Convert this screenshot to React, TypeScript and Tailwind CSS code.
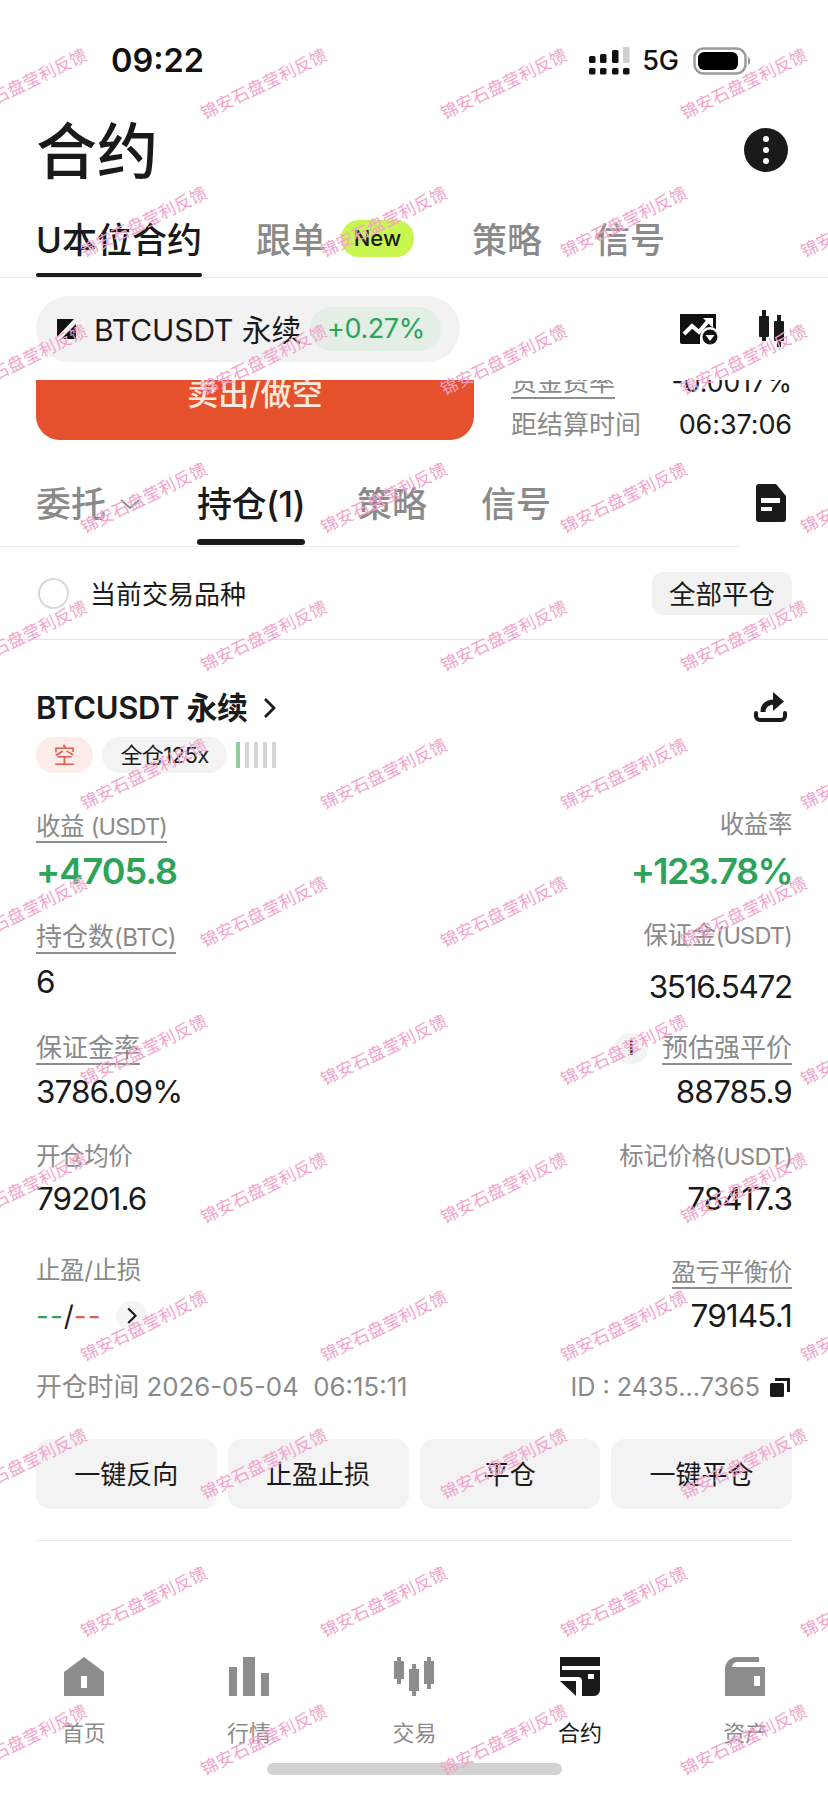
import React from "react";

const WM_ROWS = Array.from({ length: 13 }, (_, i) => i);

function Watermarks() {
  const items: { x: number; y: number }[] = [];
  WM_ROWS.forEach((r) => {
    const y = 84 + r * 138;
    const start = r % 2 === 0 ? 24 : 144;
    for (let k = 0; k < 4; k++) items.push({ x: start + k * 240, y });
  });
  return (
    <div className="absolute inset-0 pointer-events-none overflow-hidden">
      {items.map((p, i) => (
        <div
          key={i}
          className="absolute whitespace-nowrap text-[17px] leading-[20px] tracking-[0.3px] text-[#f3a3cb] -rotate-[26deg] -translate-x-1/2 -translate-y-1/2"
          style={{ left: p.x, top: p.y }}
        >
          锦安石盘莹利反馈
        </div>
      ))}
    </div>
  );
}

function Signal() {
  return (
    <svg width="42" height="28" viewBox="0 0 42 28" className="block">
      <rect x="0" y="9" width="6.5" height="7" rx="1.5" fill="#111" />
      <rect x="11" y="7" width="6.5" height="9" rx="1.5" fill="#111" />
      <rect x="23" y="3" width="6.5" height="13" rx="1.5" fill="#111" />
      <rect x="34" y="0" width="6.5" height="16" rx="1" fill="#cfcfcf" />
      <rect x="0" y="21" width="6.5" height="6.5" rx="1.5" fill="#111" />
      <rect x="11" y="21" width="6.5" height="6.5" rx="1.5" fill="#111" />
      <rect x="23" y="21" width="6.5" height="6.5" rx="1.5" fill="#111" />
      <rect x="34" y="21" width="6.5" height="6.5" rx="1.5" fill="#111" />
    </svg>
  );
}

function Battery() {
  return (
    <svg width="60" height="28" viewBox="0 0 60 28" className="block">
      <rect x="1.5" y="1.5" width="51" height="25" rx="9" fill="none" stroke="#9a9a9a" strokeWidth="2.5" />
      <rect x="5" y="5" width="40" height="18" rx="6" fill="#000" />
      <path d="M55 10 C58 11 58 17 55 18Z" fill="#9a9a9a" />
    </svg>
  );
}

function Chevron({ size = 16, color = "#1a1a1a", width = 2.6 }: { size?: number; color?: string; width?: number }) {
  return (
    <svg width={size} height={size * 1.5} viewBox="0 0 16 24" className="block">
      <path d="M4 3 L13 12 L4 21" fill="none" stroke={color} strokeWidth={width} />
    </svg>
  );
}

function NavHome() {
  return (
    <svg width="40" height="39" viewBox="0 0 40 39" className="block">
      <path d="M20 0L40 15V39H0V15Z" fill="#8c8c8c" />
      <rect x="17" y="19" width="6" height="12" fill="#fff" />
    </svg>
  );
}
function NavBars() {
  return (
    <svg width="40" height="39" viewBox="0 0 40 39" className="block">
      <rect x="0" y="10" width="8" height="29" fill="#8c8c8c" />
      <rect x="14" y="0" width="12" height="39" fill="#8c8c8c" />
      <rect x="32" y="16" width="8" height="23" fill="#8c8c8c" />
    </svg>
  );
}
function NavCandles() {
  return (
    <svg width="40" height="39" viewBox="0 0 40 39" className="block" fill="#8c8c8c">
      <rect x="0" y="4" width="10" height="18" />
      <rect x="3" y="0" width="4" height="27" />
      <rect x="15" y="12" width="10" height="22" />
      <rect x="18" y="7" width="4" height="32" />
      <rect x="30" y="4" width="10" height="23" />
      <rect x="33" y="0" width="4" height="32" />
    </svg>
  );
}
function NavContract() {
  return (
    <svg width="40" height="39" viewBox="0 0 40 39" className="block">
      <path d="M0 0H40V33A6 6 0 0 1 34 39H22V24A4 4 0 0 0 18 20H0Z" fill="#1a1a1a" />
      <rect x="2" y="9" width="38" height="4" fill="#fff" />
      <rect x="28" y="17" width="6" height="5" fill="#fff" />
      <path d="M0 24H16V39Z" fill="#1a1a1a" />
    </svg>
  );
}
function NavWallet() {
  return (
    <svg width="40" height="39" viewBox="0 0 40 39" className="block">
      <path d="M0 39V12A12 12 0 0 1 12 0H34V5H13A6 6 0 0 0 7 10H40V39Z" fill="#8c8c8c" />
      <rect x="29" y="19" width="6" height="10" fill="#fff" />
    </svg>
  );
}

function Label({ children, line, big }: { children: React.ReactNode; line?: boolean; big?: boolean }) {
  return (
    <div
      className={
        "inline-block h-[32px] leading-[30px] whitespace-nowrap text-[#8a8a8a] " +
        (big ? "text-[26px] tracking-[0px] " : "text-[24.5px] tracking-[-0.4px] ") +
        (line ? "border-b-2 border-[#8f8f8f]" : "")
      }
    >
      {children}
    </div>
  );
}

function Latin({ children }: { children: React.ReactNode }) {
  return <span className="text-[23.5px] tracking-[-0.8px]">{children}</span>;
}

function Value({ children, cls = "" }: { children: React.ReactNode; cls?: string }) {
  return <div className={"text-[31.5px] leading-[40px] tracking-[-0.9px] text-[#1a1a1a] " + cls}>{children}</div>;
}

const TAB_GRAY = "text-[35px] leading-[40px] text-[#8a8a8a] font-medium whitespace-nowrap";

export default function App() {
  const navs = [
    { icon: <NavHome />, label: "首页" },
    { icon: <NavBars />, label: "行情" },
    { icon: <NavCandles />, label: "交易" },
    { icon: <NavContract />, label: "合约", active: true },
    { icon: <NavWallet />, label: "资产" },
  ];
  return (
    <div className="relative w-[828px] h-[1793px] overflow-hidden bg-white font-[Inter,'Noto_Sans_CJK_SC',sans-serif] text-[#1a1a1a]">
      {/* status bar */}
      <div className="h-[120px] pt-[39px] pl-[111px] pr-[75px] flex justify-between">
        <div className="h-[44px] text-[32.5px] leading-[44px] font-semibold text-[#111]">09:22</div>
        <div className="h-[44px] flex items-center">
          <Signal />
          <span className="ml-[11px] text-[27px] font-medium leading-[30px] text-[#111]">5G</span>
          <span className="ml-[14px]">
            <Battery />
          </span>
        </div>
      </div>

      {/* title */}
      <div className="h-[64px] px-9 flex items-center justify-between">
        <div className="text-[61px] leading-[64px] font-medium">合约</div>
        <div className="mr-[4px] mt-[-4px] w-[44px] h-[44px] rounded-full bg-[#1a1a1a] flex flex-col items-center justify-center gap-[5px]">
          <span className="w-[6px] h-[6px] rounded-full bg-white" />
          <span className="w-[6px] h-[6px] rounded-full bg-white" />
          <span className="w-[6px] h-[6px] rounded-full bg-white" />
        </div>
      </div>

      {/* top tabs */}
      <div className="h-[94px] px-9 flex border-b border-[#e9e9e9]">
        <div className="flex flex-col pt-[36px] h-[93px] items-stretch">
          <div className="text-[35px] leading-[40px] font-medium whitespace-nowrap text-[#1a1a1a]">U本位合约</div>
          <div className="mt-[13px] h-[4px] rounded-sm bg-[#1a1a1a]" />
        </div>
        <div className={"ml-[54px] pt-[36px] " + TAB_GRAY}>跟单</div>
        <div className="ml-[15px] mt-[36px] h-[37px] w-[73px] rounded-[18px] bg-[#c8f550] text-[22px] leading-[37px] text-center font-medium text-[#1a1a1a]">
          New
        </div>
        <div className={"ml-[58px] pt-[36px] " + TAB_GRAY}>策略</div>
        <div className={"ml-[53px] pt-[36px] " + TAB_GRAY}>信号</div>
      </div>

      {/* ticker */}
      <div className="h-[102px] pt-[18px] px-9 flex justify-between">
        <div className="w-[424px] h-[66px] rounded-[33px] bg-[#f2f2f2] flex items-center pl-[21px]">
          <svg width="19" height="20" viewBox="0 0 19 20" className="block">
            <path d="M0 0H17L0 18Z" fill="#111" />
            <path d="M19 5V20H4Z" fill="#111" />
          </svg>
          <span className="ml-[18px] mt-[2px] text-[30px] leading-[36px] tracking-[-0.1px] whitespace-nowrap text-[#1a1a1a]">BTCUSDT 永续</span>
          <span className="ml-[9px] w-[131px] h-[44px] rounded-[22px] bg-[#e3eee5] text-[27px] leading-[44px] text-center tracking-[-0.4px] text-[#2ea35a]">
            +0.27%
          </span>
        </div>
        <div className="flex items-start pt-[14px] pr-[7px]">
          <svg width="40" height="34" viewBox="0 0 40 34" className="block mt-[4px]">
            <path d="M2 0H36V23H20V30H2A2 2 0 0 1 0 28V0Z" fill="#111" />
            <path d="M4 20L12 12L19 18L29 6" fill="none" stroke="#fff" strokeWidth="4" />
            <path d="M23 4H33V14Z" fill="#fff" />
            <circle cx="30" cy="23" r="10" fill="#fff" />
            <circle cx="30" cy="23" r="7.5" fill="#111" />
            <path d="M25.5 21H34.5L30 27Z" fill="#fff" />
          </svg>
          <svg width="26" height="37" viewBox="0 0 26 37" className="block ml-[39px]" fill="#1a1a1a">
            <rect x="0" y="6" width="10" height="21" rx="1" />
            <rect x="3" y="0" width="4" height="31" />
            <rect x="15" y="11" width="10" height="20" rx="1" />
            <rect x="18" y="5" width="4" height="32" />
          </svg>
        </div>
      </div>

      {/* clipped order row */}
      <div className="h-[60px] overflow-hidden px-9 flex">
        <div className="w-[438px] h-[60px] rounded-b-[24px] bg-[#e6512d] overflow-hidden">
          <div className="mt-[-6px] text-center text-[31px] leading-[40px] font-medium text-[#fbe9dc]">卖出/做空</div>
        </div>
        <div className="ml-[37px] w-[281px] mt-[-13px] text-[26px] leading-[30px] text-[#8a8a8a]">
          <div className="flex justify-between">
            <span className="border-b-2 border-[#8f8f8f]">资金费率</span>
            <span className="text-[26.5px] text-[#1a1a1a]">-0.0017%</span>
          </div>
          <div className="mt-[11px] flex justify-between">
            <span>距结算时间</span>
            <span className="text-[27px] tracking-[-0.1px] text-[#1a1a1a]">06:37:06</span>
          </div>
        </div>
      </div>

      {/* second tabs */}
      <div className="h-[107px] flex">
        <div className="w-[740px] pl-9 border-b border-[#ececec] flex h-[107px]">
          <div className={"pt-[44px] " + TAB_GRAY}>委托</div>
          <svg width="22" height="12" viewBox="0 0 22 12" className="block ml-[13px] mt-[58px]">
            <path d="M2 2L11 10L20 2" fill="none" stroke="#8a8a8a" strokeWidth="1.8" />
          </svg>
          <div className="ml-[56px] flex flex-col pt-[44px]">
            <div className="text-[35px] leading-[40px] font-medium whitespace-nowrap tracking-[-0.5px] text-[#1a1a1a]">持仓(1)</div>
            <div className="mt-[15px] h-[6px] rounded-[3px] bg-[#1a1a1a]" />
          </div>
          <div className={"ml-[52px] pt-[44px] " + TAB_GRAY}>策略</div>
          <div className={"ml-[54px] pt-[44px] " + TAB_GRAY}>信号</div>
        </div>
        <svg width="30" height="38" viewBox="0 0 30 38" className="block ml-[16px] mt-[44px]">
          <path d="M3 0H20L30 12V35A3 3 0 0 1 27 38H3A3 3 0 0 1 0 35V3A3 3 0 0 1 3 0Z" fill="#1a1a1a" />
          <rect x="5" y="14" width="19" height="5" fill="#fff" />
          <rect x="5" y="23" width="11" height="4" fill="#fff" />
        </svg>
      </div>

      {/* filter row */}
      <div className="h-[93px] px-9 flex items-center justify-between border-b border-[#e4e4e4]">
        <div className="flex items-center">
          <div className="ml-[2px] w-[31px] h-[31px] rounded-full border-2 border-[#d9d9d9]" />
          <div className="ml-[21px] mt-[3px] text-[26px] leading-[32px] whitespace-nowrap text-[#1a1a1a]">当前交易品种</div>
        </div>
        <div className="w-[140px] h-[43px] rounded-[10px] bg-[#f2f2f2] text-center text-[26.5px] leading-[45px] text-[#1a1a1a]">全部平仓</div>
      </div>

      {/* position card */}
      <div className="px-9">
        <div className="pt-[50px] h-[86px] flex justify-between">
          <div className="h-[36px] flex items-center">
            <span className="text-[31px] leading-[36px] font-semibold tracking-[-0.4px] whitespace-nowrap">BTCUSDT 永续</span>
            <span className="ml-[13px]">
              <Chevron size={16} width={2.8} />
            </span>
          </div>
          <svg width="33" height="31" viewBox="0 0 33 31" className="block mr-[5px] mt-[2px]">
            <path d="M2 21V24A4 4 0 0 0 6 28H27A4 4 0 0 0 31 24V21" fill="none" stroke="#1a1a1a" strokeWidth="4" strokeLinecap="round" />
            <path d="M9 20C9 13 13 10 21 10" fill="none" stroke="#1a1a1a" strokeWidth="5" />
            <path d="M19 0L30 9.5L19 19Z" fill="#1a1a1a" />
          </svg>
        </div>
        <div className="mt-[11px] h-[36px] flex items-center">
          <div className="w-[57px] h-[36px] rounded-[18px] bg-[#fdecea] text-center text-[22px] leading-[36px] text-[#d9644c]">空</div>
          <div className="ml-[9px] w-[125px] h-[36px] rounded-[18px] bg-[#f3f3f3] text-center text-[22px] leading-[36px] tracking-[-0.6px] whitespace-nowrap text-[#1a1a1a]">
            全仓125x
          </div>
          <div className="ml-[9px] flex gap-[5px] h-[26px]">
            <span className="w-[4px] bg-[#8fcb9d]" />
            <span className="w-[4px] bg-[#d5d5d5]" />
            <span className="w-[4px] bg-[#d5d5d5]" />
            <span className="w-[4px] bg-[#d5d5d5]" />
            <span className="w-[4px] bg-[#d5d5d5]" />
          </div>
        </div>

        {/* row 1 */}
        <div className="h-[118px] flex justify-between">
          <div className="pt-[38px]">
            <Label line>
              收益 <Latin>(USDT)</Latin>
            </Label>
            <div className="mt-[8px] text-[36px] leading-[40px] font-semibold tracking-[-0.9px] text-[#2ea35a]">+4705.8</div>
          </div>
          <div className="pt-[36px] text-right">
            <Label>收益率</Label>
            <div className="mt-[10px] text-[36px] leading-[40px] font-semibold tracking-[-1.6px] text-[#2ea35a]">+123.78%</div>
          </div>
        </div>

        {/* row 2 */}
        <div className="h-[116px] flex justify-between">
          <div className="pt-[31px]">
            <Label line big>
              持仓数<span className="text-[24px] tracking-[-0.4px]">(BTC)</span>
            </Label>
            <Value cls="mt-[8px]">6</Value>
          </div>
          <div className="pt-[29px] text-right">
            <Label>
              保证金<Latin>(USDT)</Latin>
            </Label>
            <div className="mt-[15px] text-[31.5px] leading-[40px] tracking-[-1.3px] text-[#1a1a1a]">3516.5472</div>
          </div>
        </div>

        {/* row 3 */}
        <div className="h-[105px] flex justify-between">
          <div className="pt-[26px]">
            <Label line big>
              保证金率
            </Label>
            <Value cls="mt-[7px]">3786.09%</Value>
          </div>
          <div className="pt-[26px] text-right">
            <div className="flex justify-end items-start">
              <div className="mr-[14px] w-[33px] h-[31px] rounded-full bg-[#f3f3f3] text-center text-[20px] leading-[31px] font-semibold text-[#333]">i</div>
              <Label line big>
                预估强平价
              </Label>
            </div>
            <Value cls="mt-[7px]">88785.9</Value>
          </div>
        </div>

        {/* row 4 */}
        <div className="h-[107px] flex justify-between">
          <div className="pt-[29px]">
            <Label>开仓均价</Label>
            <Value cls="mt-[6px]">79201.6</Value>
          </div>
          <div className="pt-[29px] text-right">
            <Label>
              标记价格<Latin>(USDT)</Latin>
            </Label>
            <Value cls="mt-[6px]">78417.3</Value>
          </div>
        </div>

        {/* row 5 */}
        <div className="h-[117px] flex justify-between">
          <div className="pt-[36px]">
            <Label>止盈/止损</Label>
            <div className="mt-[9px] h-[40px] flex items-center">
              <span className="text-[28px] leading-[40px] tracking-[1px] text-[#2ea35a]">--</span>
              <span className="text-[28px] leading-[40px] text-[#1a1a1a]">/</span>
              <span className="text-[28px] leading-[40px] tracking-[1px] text-[#d9644c]">--</span>
              <span className="ml-[14px] w-[32px] h-[30px] rounded-full bg-[#f5f5f5] flex items-center justify-center">
                <Chevron size={13} width={2.6} />
              </span>
            </div>
          </div>
          <div className="pt-[38px] text-right">
            <Label line>盈亏平衡价</Label>
            <Value cls="mt-[7px]">79145.1</Value>
          </div>
        </div>

        {/* meta */}
        <div className="mt-[35px] h-[32px] flex justify-between items-center leading-[32px] text-[#8a8a8a]">
          <span className="whitespace-pre text-[25.8px]">开仓时间 2026-05-04  06:15:11</span>
          <span className="flex items-center text-[25.2px]">
            <span className="whitespace-nowrap">ID : 2435...7365</span>
            <svg width="20" height="19" viewBox="0 0 20 19" className="block ml-[10px] mr-[2px]">
              <path d="M5 0H20V14H17V3H5Z" fill="#1a1a1a" />
              <rect x="0" y="5" width="14" height="14" rx="1.5" fill="#1a1a1a" />
            </svg>
          </span>
        </div>

        {/* actions */}
        <div className="mt-[36px] grid grid-cols-4 gap-[11px]">
          {["一键反向", "止盈止损", "平仓", "一键平仓"].map((t) => (
            <div key={t} className="h-[70px] rounded-[14px] bg-[#f3f3f3] text-center text-[26px] leading-[72px] text-[#1a1a1a]">
              {t}
            </div>
          ))}
        </div>
        <div className="mt-[31px] h-[1px] bg-[#e8e8e8]" />
      </div>

      {/* bottom nav */}
      <div className="mt-[116px] pl-[1px] grid grid-cols-5">
        {navs.map((n) => (
          <div key={n.label} className="flex flex-col items-center">
            {n.icon}
            <div className={"mt-[22px] text-[22px] leading-[30px] " + (n.active ? "text-[#1a1a1a]" : "text-[#8a8a8a]")}>{n.label}</div>
          </div>
        ))}
      </div>
      <div className="mt-[15px] mx-auto w-[295px] h-[12px] rounded-[6px] bg-[#d2d2d2]" />

      <Watermarks />
    </div>
  );
}
